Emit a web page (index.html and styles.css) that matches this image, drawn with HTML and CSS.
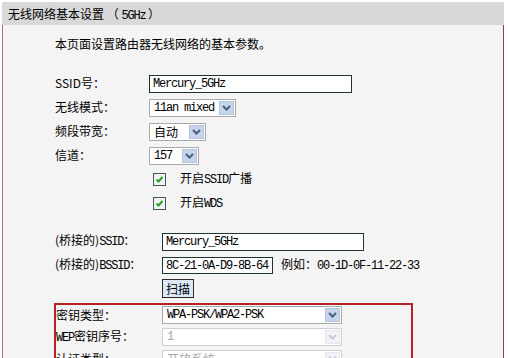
FILE: index.html
```html
<!DOCTYPE html>
<html lang="zh-CN">
<head>
    <meta charset="UTF-8">
    <title>无线网络基本设置</title>
    <link rel="stylesheet" href="styles.css">
</head>
<body>
    <div class="panel">
        <div class="title">无线网络基本设置 （ <span class="mono">5GHz</span> ）</div>
        <div class="content">
            <p class="intro">本页面设置路由器无线网络的基本参数。</p>

            <div class="grid basic">
                <label>SSID号：</label>
                <div><span class="field ssid mono">Mercury_5GHz</span></div>

                <label>无线模式：</label>
                <div>
                    <span class="dropdown mode">
                        <span class="val mono">11an mixed</span>
                        <span class="arrow"><svg width="9" height="6" viewBox="0 0 9 6"><path d="M1 1 L4.5 4.5 L8 1" fill="none" stroke="#4a5f86" stroke-width="2"/></svg></span>
                    </span>
                </div>

                <label>频段带宽：</label>
                <div>
                    <span class="dropdown band">
                        <span class="val">自动</span>
                        <span class="arrow"><svg width="9" height="6" viewBox="0 0 9 6"><path d="M1 1 L4.5 4.5 L8 1" fill="none" stroke="#4a5f86" stroke-width="2"/></svg></span>
                    </span>
                </div>

                <label>信道：</label>
                <div>
                    <span class="dropdown chan">
                        <span class="val mono">157</span>
                        <span class="arrow"><svg width="9" height="6" viewBox="0 0 9 6"><path d="M1 1 L4.5 4.5 L8 1" fill="none" stroke="#4a5f86" stroke-width="2"/></svg></span>
                    </span>
                </div>

                <span></span>
                <div class="check">
                    <span class="box"><svg width="11" height="11" viewBox="0 0 11 11"><path d="M2.5 5.5 L4.5 7.5 L8.5 3" fill="none" stroke="#22a322" stroke-width="2"/></svg></span>
                    <span>开启<span class="mono">SSID</span>广播</span>
                </div>

                <span></span>
                <div class="check">
                    <span class="box"><svg width="11" height="11" viewBox="0 0 11 11"><path d="M2.5 5.5 L4.5 7.5 L8.5 3" fill="none" stroke="#22a322" stroke-width="2"/></svg></span>
                    <span>开启<span class="mono">WDS</span></span>
                </div>
            </div>

            <div class="grid bridge">
                <label>(桥接的)<span class="mono">SSID</span>：</label>
                <div><span class="field bssid-name mono">Mercury_5GHz</span></div>

                <label>(桥接的)<span class="mono">BSSID</span>：</label>
                <div class="inline">
                    <span class="field mac mono">8C-21-0A-D9-8B-64</span>
                    <span class="hint">例如：<span class="mono">00-1D-0F-11-22-33</span></span>
                </div>

                <span></span>
                <div class="scan-row"><button class="scan">扫描</button></div>
            </div>

            <div class="security">
                <label>密钥类型：</label>
                <div>
                    <span class="dropdown wide">
                        <span class="val mono">WPA-PSK/WPA2-PSK</span>
                        <span class="arrow"><svg width="9" height="6" viewBox="0 0 9 6"><path d="M1 1 L4.5 4.5 L8 1" fill="none" stroke="#4a5f86" stroke-width="2"/></svg></span>
                    </span>
                </div>

                <label><span class="mono">WEP</span>密钥序号：</label>
                <div>
                    <span class="dropdown wide disabled">
                        <span class="val mono">1</span>
                        <span class="arrow"><svg width="9" height="6" viewBox="0 0 9 6"><path d="M1 1 L4.5 4.5 L8 1" fill="none" stroke="#c3cbd8" stroke-width="2"/></svg></span>
                    </span>
                </div>

                <label>认证类型：</label>
                <div>
                    <span class="dropdown wide disabled">
                        <span class="val">开放系统</span>
                        <span class="arrow"><svg width="9" height="6" viewBox="0 0 9 6"><path d="M1 1 L4.5 4.5 L8 1" fill="none" stroke="#c3cbd8" stroke-width="2"/></svg></span>
                    </span>
                </div>
            </div>
        </div>
    </div>
</body>
</html>
```

FILE: styles.css
```css
body {
    margin: 0;
    background: #ffffff;
    font-family: "Noto Sans CJK SC", sans-serif;
    font-size: 12px;
    color: #000;
    overflow: hidden;
}
.mono {
    font-family: "Liberation Mono", "Noto Sans CJK SC", monospace;
    font-size: 12px;
    letter-spacing: -1.2px;
}
.panel {
    margin: 2px 0 0 2px;
    width: 502px;
}
.title {
    height: 23px;
    line-height: 23px;
    padding-left: 6px;
    background: #d8d8d8;
}
.content {
    background: #f4f4f4;
    border-left: 1px solid #b86c6c;
    border-right: 1px solid #7d4b3c;
    padding-left: 52px;
    height: 340px;
}
.intro {
    margin: 0 0 17px 0;
    padding-top: 9px;
    line-height: 20px;
}
.grid {
    display: grid;
    grid-auto-rows: 24px;
    align-items: center;
}
.basic {
    grid-template-columns: 94px 1fr;
}
.bridge {
    grid-template-columns: 107px 1fr;
    margin-top: 14px;
    grid-template-rows: 24px 24px 22px;
}
label {
    line-height: 18px;
}
.field {
    display: inline-block;
    box-sizing: border-box;
    height: 18px;
    line-height: 16px;
    padding: 0 3px;
    background: #fff;
    border: 1px solid #1f3333;
    vertical-align: middle;
}
.ssid {
    width: 203px;
}
.bssid-name {
    width: 202px;
}
.mac {
    width: 111px;
    height: 17px;
}
.inline {
    display: flex;
    align-items: center;
    gap: 8px;
}
.hint {
    line-height: 18px;
}
.dropdown {
    display: inline-flex;
    align-items: center;
    box-sizing: border-box;
    height: 18px;
    padding: 1px;
    background: #fff;
    border: 1px solid #a9a9ad;
    vertical-align: middle;
}
.dropdown .val {
    flex: 1;
    padding-left: 3px;
    line-height: 14px;
    white-space: nowrap;
}
.dropdown .arrow {
    display: flex;
    align-items: center;
    justify-content: center;
    box-sizing: border-box;
    width: 15px;
    height: 14px;
    background: #c6d5ea;
    border: 1px solid #b4c4dc;
}
.mode { width: 87px; }
.band { width: 57px; }
.chan { width: 50px; }
.wide { width: 180px; }
.disabled {
    border-color: #cfcfcf;
    color: #a6a6a6;
}
.disabled .arrow {
    background: #f1f3f6;
    border-color: #e2e6ec;
}
.check {
    display: flex;
    align-items: center;
    padding-left: 4px;
    gap: 14px;
    line-height: 18px;
}
.box {
    display: flex;
    align-items: center;
    justify-content: center;
    box-sizing: border-box;
    width: 13px;
    height: 13px;
    border: 1px solid #3d5a6c;
    background: #f2f4f2;
}
.scan-row {
    display: flex;
    align-items: center;
}
.scan {
    font-family: "Noto Sans CJK SC", sans-serif;
    font-size: 12px;
    height: 19px;
    width: 32px;
    padding: 0;
    line-height: 17px;
    background: #dce8f6;
    border: 1px solid #2b2b2b;
    color: #000;
}
.security {
    display: grid;
    grid-template-columns: 106px 1fr;
    grid-auto-rows: 17px;
    row-gap: 5px;
    align-items: center;
    margin: 4px 0 0 -1px;
    width: 359px;
    box-sizing: border-box;
    border: 2px solid #b52222;
    padding-top: 1px;
    height: 80px;
}
```
